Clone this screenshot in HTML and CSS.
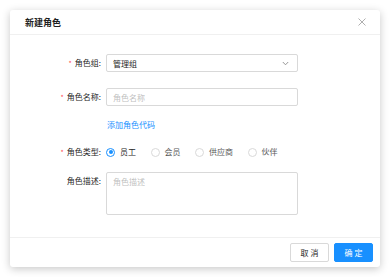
FILE: index.html
```html
<!DOCTYPE html>
<html lang="zh-CN">
<head>
    <meta charset="utf-8">
    <title>新建角色</title>
    <link rel="stylesheet" href="styles.css">
</head>
<body>
    <div class="modal">
        <div class="modal-head">
            <span class="modal-title">新建角色</span>
            <span class="close">
                <svg width="8" height="8" viewBox="0 0 8 8"><path d="M0.5 0.5L7.5 7.5M7.5 0.5L0.5 7.5" stroke="#a6a6a6" stroke-width="0.9" fill="none"/></svg>
            </span>
        </div>

        <form class="modal-body" autocomplete="off">
            <div class="row r-group">
                <label class="lbl"><i class="req">*</i>角色组:</label>
                <div class="ctrl select">
                    <span>管理组</span>
                    <svg width="7" height="5" viewBox="0 0 7 5"><path d="M0.8 1L3.5 3.8L6.2 1" stroke="#8c8c8c" stroke-width="0.9" fill="none"/></svg>
                </div>
            </div>
            <div class="row r-name">
                <label class="lbl"><i class="req">*</i>角色名称:</label>
                <input class="ctrl input" type="text" placeholder="角色名称">
            </div>
            <div class="row r-link">
                <span class="lbl"></span>
                <a class="add-link" href="#">添加角色代码</a>
            </div>
            <div class="row r-type">
                <label class="lbl"><i class="req">*</i>角色类型:</label>
                <div class="radios">
                    <label class="radio"><span class="dot on"></span>员工</label>
                    <label class="radio"><span class="dot"></span>会员</label>
                    <label class="radio"><span class="dot"></span>供应商</label>
                    <label class="radio"><span class="dot"></span>伙伴</label>
                </div>
            </div>
            <div class="row r-desc">
                <label class="lbl">角色描述:</label>
                <textarea class="ctrl area" placeholder="角色描述"></textarea>
            </div>
        </form>

        <div class="modal-foot">
            <button class="btn">取 消</button>
            <button class="btn primary">确 定</button>
        </div>
    </div>
</body>
</html>
```

FILE: styles.css
```css
body {
    margin: 0;
    background: #fff;
    font-family: "Noto Sans CJK SC", "Noto Sans", sans-serif;
    color: #262626;
    padding: 10px 11px 10px 10px;
}
.modal {
    width: 370px;
    height: 257px;
    background: #fff;
    border-radius: 3px;
    box-shadow: 0 2px 8px rgba(0, 0, 0, 0.22);
    display: flex;
    flex-direction: column;
}
.modal-head {
    height: 25px;
    border-bottom: 1px solid #f0f0f0;
    display: flex;
    align-items: center;
    justify-content: space-between;
    padding: 0 14px 0 15px;
    box-sizing: border-box;
}
.modal-title {
    font-size: 9px;
    font-weight: bold;
    color: #1f1f1f;
}
.close {
    display: flex;
}
.modal-body {
    flex: 1;
    margin: 0;
    padding-top: 19px;
    display: flex;
    flex-direction: column;
}
.row {
    display: flex;
    align-items: center;
}
.r-group { margin-bottom: 16px; }
.r-name { margin-bottom: 13px; }
.r-link { margin-bottom: 12px; }
.r-type { margin-bottom: 11px; }
.r-desc { align-items: flex-start; }
.lbl {
    width: 91px;
    padding-right: 5px;
    text-align: right;
    font-size: 8px;
    color: #262626;
    line-height: 18px;
}
.req {
    font-style: normal;
    color: #ff4d4f;
    font-size: 7px;
    margin-right: 3px;
}
.ctrl {
    width: 192px;
    box-sizing: border-box;
    border: 1px solid #d9d9d9;
    border-radius: 2px;
    font-family: inherit;
    font-size: 8px;
    background: #fff;
}
.select {
    height: 18px;
    display: flex;
    align-items: center;
    justify-content: space-between;
    padding: 0 8px 0 6px;
}
.input {
    height: 18px;
    padding: 0 6px;
    outline: none;
}
.area {
    height: 43px;
    padding: 3px 6px;
    resize: none;
    outline: none;
}
.input::placeholder, .area::placeholder {
    color: #bfbfbf;
}
.add-link {
    font-size: 8px;
    color: #1890ff;
    text-decoration: none;
    line-height: 12px;
    margin-left: 1px;
}
.radios {
    display: flex;
    gap: 14.5px;
}
.radio {
    display: flex;
    align-items: center;
    font-size: 8px;
    color: #595959;
    line-height: 18px;
}
.dot {
    width: 9px;
    height: 9px;
    box-sizing: border-box;
    border: 1px solid #d9d9d9;
    border-radius: 50%;
    margin-right: 5px;
    position: relative;
}
.dot.on {
    border-color: #1890ff;
}
.dot.on::after {
    content: "";
    position: absolute;
    left: 1.5px;
    top: 1.5px;
    width: 4px;
    height: 4px;
    border-radius: 50%;
    background: #1890ff;
}
.radio:first-child {
    color: #262626;
}
.modal-foot {
    height: 30px;
    border-top: 1px solid #f0f0f0;
    display: flex;
    align-items: center;
    justify-content: flex-end;
    gap: 5px;
    padding: 0 7px;
    box-sizing: border-box;
}
.btn {
    width: 39px;
    height: 19px;
    font-family: inherit;
    font-size: 8px;
    border: 1px solid #d9d9d9;
    border-radius: 2px;
    background: #fff;
    color: #262626;
    padding: 0;
}
.btn.primary {
    background: #1890ff;
    border-color: #1890ff;
    color: #fff;
}
```
